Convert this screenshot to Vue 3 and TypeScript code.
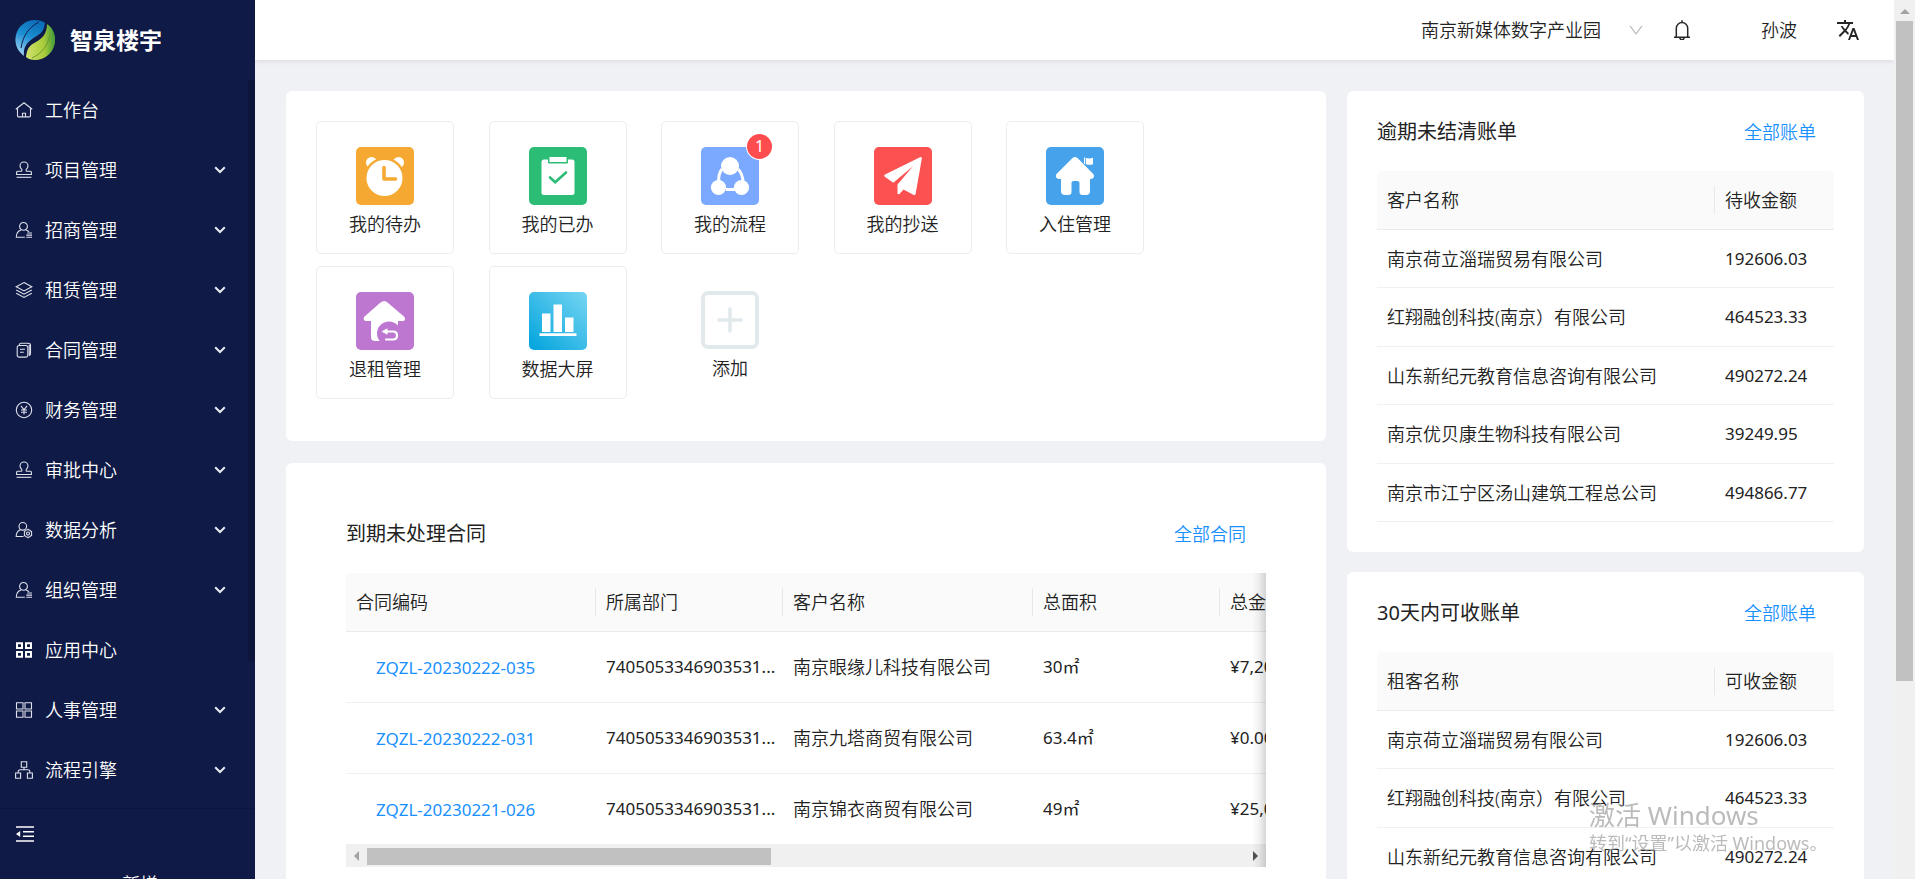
<script setup lang="ts">
import { ref } from 'vue'

interface MenuItem {
  label: string
  paths: string[]
  expandable: boolean
  bold?: boolean
}

const STAMP = [
  'M6.8 10.2V8.4C5.6 7.4 5 6.3 5 5a4 4 0 0 1 8 0c0 1.300-.6 2.400-1.800 3.400v1.800',
  'M6.800 10.200H2.600a1 1 0 0 0-1 1v2.300h14.800v-2.300a1 1 0 0 0-1-1h-4.200',
  'M1.600 16.300h14.800',
]
const PERSON_LIST = [
  'M8.500 1.500a3.900 3.900 0 1 0 0 7.800a3.900 3.900 0 1 0 0-7.800z',
  'M6 9c-3 1-4.700 3.400-4.700 7.200h8.600M11 9c1.200.4 2.200 1 3 1.900',
  'M12.300 12h4.700M11.300 14.100h5.700M11.300 16.200h5.700',
]

const menu: MenuItem[] = [
  {
    label: '工作台',
    expandable: false,
    paths: ['M.8 8.200L9 1.700l8.200 6.500', 'M2.500 7v7.700a1.200 1.200 0 0 0 1.200 1.200h10.600a1.200 1.200 0 0 0 1.200-1.200V7', 'M7.500 15.800v-3.600h3v3.600'],
  },
  { label: '项目管理', expandable: true, paths: STAMP },
  { label: '招商管理', expandable: true, paths: PERSON_LIST },
  {
    label: '租赁管理',
    expandable: true,
    paths: ['M9 1.600l7.800 4.100L9 9.900L1.200 5.700z', 'M1.200 9L9 13.200L16.800 9', 'M1.200 12.200L9 16.400l7.800-4.200'],
  },
  {
    label: '合同管理',
    expandable: true,
    paths: ['M4 4.500h7a1.800 1.800 0 0 1 1.800 1.800v8a1.800 1.800 0 0 1-1.800 1.800H4a1.800 1.800 0 0 1-1.800-1.800v-8A1.800 1.800 0 0 1 4 4.500z', 'M4.200 4c.2-1 .8-1.700 1.800-1.700h7.200c1.400 0 2.300.9 2.300 2.300v8c0 1.200-.6 1.900-1.600 2.100M14.200 4v10', 'M5 8.300h5M5 11.300h3.800'],
  },
  {
    label: '财务管理',
    expandable: true,
    paths: ['M9 1.300a7.700 7.700 0 1 0 0 15.400a7.700 7.700 0 1 0 0-15.400z', 'M6 4.800l3 4l3-4M9 8.800v4.800M6 9h6M6 11.300h6'],
  },
  { label: '审批中心', expandable: true, paths: STAMP },
  {
    label: '数据分析',
    expandable: true,
    paths: ['M7.800 1.500a3.800 3.800 0 1 0 0 7.600a3.800 3.800 0 1 0 0-7.600z', 'M5.400 8.800c-2.700 1-4.200 3.200-4.200 6.700h7.300', 'M13 8.800a3.700 3.700 0 1 0 0 7.400a3.700 3.700 0 1 0 0-7.400z', 'M13 11a1.500 1.500 0 1 0 0 3a1.500 1.500 0 1 0 0-3zM13 7.800v1M13 16.200v1M8.900 10.200l.9.500M16.200 14.300l.9.500M8.900 14.800l.9-.5M16.200 10.700l.9-.5'],
  },
  { label: '组织管理', expandable: true, paths: PERSON_LIST },
  {
    label: '应用中心',
    expandable: false,
    bold: true,
    paths: ['M2 2.300h5v4.700H2zM11 2.300h5v4.700h-5zM2 11h5v4.700H2zM11 11h5v4.700h-5z'],
  },
  {
    label: '人事管理',
    expandable: true,
    paths: ['M1.500 1.700h6.500v6.300H1.500zM10 1.700h6.500v6.300H10zM1.500 10h6.500v6.300H1.500zM10 10h6.500v6.300H10z'],
  },
  {
    label: '流程引擎',
    expandable: true,
    paths: ['M6.300.8h5.400v5.400H6.300zM.6 12h5v5.200h-5zM12.400 12h5v5.200h-5z', 'M9 6.200v2.600M3.100 12v-1.200a2 2 0 0 1 2-2h7.800a2 2 0 0 1 2 2V12'],
  },
]

interface Shortcut {
  label: string
  icon: string
  badge?: number
}

const shortcuts: Shortcut[] = [
  { label: '我的待办', icon: 'clock' },
  { label: '我的已办', icon: 'done' },
  { label: '我的流程', icon: 'flow', badge: 1 },
  { label: '我的抄送', icon: 'send' },
  { label: '入住管理', icon: 'checkin' },
  { label: '退租管理', icon: 'checkout' },
  { label: '数据大屏', icon: 'chart' },
]

const contracts = [
  { code: 'ZQZL-20230222-035', dept: '7405053346903531...', customer: '南京眼缘儿科技有限公司', area: '30㎡', amount: '¥7,200.00' },
  { code: 'ZQZL-20230222-031', dept: '7405053346903531...', customer: '南京九塔商贸有限公司', area: '63.4㎡', amount: '¥0.00' },
  { code: 'ZQZL-20230221-026', dept: '7405053346903531...', customer: '南京锦衣商贸有限公司', area: '49㎡', amount: '¥25,000.00' },
]

const bills = [
  { name: '南京荷立淄瑞贸易有限公司', amount: '192606.03' },
  { name: '红翔融创科技(南京）有限公司', amount: '464523.33' },
  { name: '山东新纪元教育信息咨询有限公司', amount: '490272.24' },
  { name: '南京优贝康生物科技有限公司', amount: '39249.95' },
  { name: '南京市江宁区汤山建筑工程总公司', amount: '494866.77' },
]

const panels = [
  { title: '逾期未结清账单', nameHead: '客户名称', amountHead: '待收金额' },
  { title: '30天内可收账单', nameHead: '租客名称', amountHead: '可收金额' },
]

const park = ref('南京新媒体数字产业园')
</script>

<template>
  <div class="layout">
    <aside class="sidebar">
      <div class="brand">
        <svg class="logo" viewBox="0 0 40 40" aria-hidden="true">
          <defs>
            <linearGradient id="leafBlue" x1="0.600" y1="0" x2="0.200" y2="1">
              <stop offset="0" stop-color="#0c6db8" />
              <stop offset="0.450" stop-color="#1c8fd2" />
              <stop offset="1" stop-color="#a4d4f2" />
            </linearGradient>
            <linearGradient id="leafGreen" x1="0" y1="0.500" x2="1" y2="0.400">
              <stop offset="0" stop-color="#cfe06a" />
              <stop offset="0.600" stop-color="#a9cc3a" />
              <stop offset="1" stop-color="#3f9a3a" />
            </linearGradient>
          </defs>
          <path d="M9 36C2 31-1 23 1 15C3 6 11 0 20 0c4 0 8 1 10 3c-1 9-5 11-10 14c-8 5-12 10-11 19z" fill="url(#leafBlue)" />
          <path d="M32 4c6 4 9 11 8 19c-2 10-10 17-20 17c-4 0-7-1-9-3c1-9 4-12 10-15c7-4 11-9 11-18z" fill="url(#leafGreen)" />
          <path d="M6 28C8 16 13 8 24 2" fill="none" stroke="#101c4a" stroke-width="1" />
          <path d="M17 38C27 33 33 26 35 14" fill="none" stroke="#6f9a2c" stroke-width="1" />
        </svg>
        <h1 class="brand-name">智泉楼宇</h1>
      </div>
      <div class="menu-area">
        <nav class="menu">
          <button v-for="item in menu" :key="item.label" type="button" class="menu-item">
            <svg class="menu-icon" :class="{ bold: item.bold }" viewBox="0 0 18 18" aria-hidden="true">
              <path v-for="d in item.paths" :key="d" :d="d" />
            </svg>
            <span class="menu-label">{{ item.label }}</span>
            <svg v-if="item.expandable" class="chevron" viewBox="0 0 12 8" aria-hidden="true">
              <path d="M1.200 1.200L6 6l4.800-4.800" />
            </svg>
          </button>
        </nav>
        <div class="menu-track"><div class="menu-thumb"></div></div>
      </div>
      <button type="button" class="collapse" aria-label="收起菜单">
        <svg viewBox="0 0 18 16" aria-hidden="true">
          <path d="M0 1h18M7 5.700h11M7 10.300h11M0 15h18" stroke="#fff" stroke-width="1.500" />
          <path d="M0 8l4.200-3v6z" fill="#fff" />
        </svg>
      </button>
      <button type="button" class="create"><span>+</span><span>新增</span></button>
    </aside>

    <div class="page">
      <header class="topbar">
        <label class="park">
          <select v-model="park" aria-label="园区">
            <option>南京新媒体数字产业园</option>
          </select>
          <svg class="park-arrow" viewBox="0 0 14 10" aria-hidden="true">
            <path d="M1 .8l6 8l6-8" />
          </svg>
        </label>
        <button type="button" class="icon-button bell" aria-label="消息">
          <svg viewBox="0 0 18 20" aria-hidden="true">
            <path d="M9 .3v2M3.300 16.600V8.200a5.700 5.700 0 0 1 11.400 0v8.400M1 17.200h16M6.900 17.600a2.100 2.100 0 0 0 4.200 0" />
          </svg>
        </button>
        <a href="#" class="user">孙波</a>
        <button type="button" class="icon-button translate" aria-label="语言">
          <svg viewBox="1 2 22 20" aria-hidden="true">
            <path d="M12.870 15.070l-2.540-2.510.03-.03A17.520 17.520 0 0 0 14.070 6H17V4h-7V2H8v2H1v2h11.170C11.500 7.920 10.440 9.750 9 11.350 8.070 10.320 7.300 9.190 6.690 8h-2c.73 1.630 1.730 3.170 2.980 4.560l-5.090 5.020L4 19l5-5 3.110 3.110.76-2.040zM18.500 10h-2L12 22h2l1.120-3h4.750L21 22h2l-4.500-12zm-2.620 7l1.620-4.330L19.120 17h-3.240z" />
          </svg>
        </button>
      </header>

      <main class="content">
        <div class="column">
          <section class="card shortcuts">
            <a v-for="s in shortcuts" :key="s.label" href="#" class="tile">
              <span class="tile-icon">
                <svg v-if="s.icon === 'clock'" viewBox="0 0 58 58" aria-hidden="true">
                  <rect width="58" height="58" rx="5" fill="#f5a932" />
                  <circle cx="15.500" cy="15.500" r="5.500" fill="#fff" /><circle cx="42.500" cy="15.500" r="5.500" fill="#fff" />
                  <circle cx="28.500" cy="31" r="20.500" fill="#f5a932" /><circle cx="28.500" cy="31" r="18" fill="#fff" />
                  <path d="M28 20.500v11.500h11.500" fill="none" stroke="#f5a932" stroke-width="3.600" stroke-linecap="round" stroke-linejoin="round" />
                </svg>
                <svg v-else-if="s.icon === 'done'" viewBox="0 0 58 58" aria-hidden="true">
                  <rect width="58" height="58" rx="5" fill="#2bbd76" />
                  <rect x="12.500" y="12.500" width="33" height="35.500" rx="2.500" fill="#fff" />
                  <rect x="19" y="8.500" width="20" height="8" rx="1" fill="#2bbd76" />
                  <rect x="20.500" y="10" width="17" height="5" fill="#fff" />
                  <path d="M21 30.500l5.200 4.800L37 25.500" fill="none" stroke="#2bbd76" stroke-width="2.600" stroke-linecap="round" />
                </svg>
                <svg v-else-if="s.icon === 'flow'" viewBox="0 0 58 58" aria-hidden="true">
                  <rect width="58" height="58" rx="5" fill="#7ba9ff" />
                  <path d="M21 22c-3 4-4 8-3 14M37 22c4 4 5 8 5 14M25 42.500h9" fill="none" stroke="#fff" stroke-width="3" />
                  <circle cx="29" cy="19" r="9" fill="#fff" /><circle cx="17.500" cy="40.500" r="7.600" fill="#fff" /><circle cx="40.500" cy="40.500" r="7.600" fill="#fff" />
                </svg>
                <svg v-else-if="s.icon === 'send'" viewBox="0 0 58 58" aria-hidden="true">
                  <rect width="58" height="58" rx="5" fill="#fb5150" />
                  <path d="M46.500 10L11 27.500c-1 .6-1 1.600-.2 2.200l8.500 6.100L39 19.300L23.500 37.500V47l1.700.3l4.300-4.800l10.300 5.600c1 .3 1.600-.2 1.800-1l6.200-35.400c.1-1.300-.4-1.900-1.300-1.700z" fill="#fff" />
                </svg>
                <svg v-else-if="s.icon === 'checkin'" viewBox="0 0 58 58" aria-hidden="true">
                  <rect width="58" height="58" rx="5" fill="#46a2ea" />
                  <path d="M26.500 11q2.500-2 5 0l15.800 16c1.500 2.500.5 4.500-2 5h-1.300v12q0 4-4 4h-3.500q-3 0-3-3v-9q0-2-2-2h-4q-2 0-2 2v9q0 3-3 3H19q-4 0-4-4V32h-2c-3-.5-4-2.500-2.500-5z" fill="#fff" />
                  <path d="M38 10.500h1.200V17H38zM40 11q3.500 1 7-.3v6.600q-3.500 1-7 0z" fill="#fff" />
                </svg>
                <svg v-else-if="s.icon === 'checkout'" viewBox="0 0 58 58" aria-hidden="true">
                  <rect width="58" height="58" rx="5" fill="#bd77d0" />
                  <path d="M24.500 10.500q4-3 7 0L48.500 25c1 2 .5 4-1.500 4h-5v15q0 5-4 5H19q-4 0-4-4V29h-5c-2 0-3-2-2-4z" fill="#fff" />
                  <circle cx="33" cy="41.500" r="12" fill="#bd77d0" />
                  <path d="M28 39.500h9q4 0 4 4t-4 4h-7" fill="none" stroke="#fff" stroke-width="2.200" stroke-linecap="round" />
                  <path d="M25.500 39.500l6-3.300v6.600z" fill="#fff" />
                </svg>
                <svg v-else viewBox="0 0 58 58" aria-hidden="true">
                  <defs>
                    <linearGradient id="chartBg" x1="0" y1="1" x2="1" y2="0">
                      <stop offset="0" stop-color="#00a3dd" /><stop offset="1" stop-color="#76d5f2" />
                    </linearGradient>
                  </defs>
                  <rect width="58" height="58" rx="5" fill="url(#chartBg)" />
                  <path d="M13 21.500h8.500V40H13zM24.500 12.500H33V40h-8.500zM36 25.500h8.500V40H36zM10.500 41.200h37V44h-37z" fill="#fff" />
                </svg>
                <span v-if="s.badge" class="badge">{{ s.badge }}</span>
              </span>
              <span>{{ s.label }}</span>
            </a>
            <button type="button" class="tile add">
              <span class="tile-icon">
                <svg viewBox="0 0 58 58" aria-hidden="true">
                  <rect x="2" y="2" width="54" height="54" rx="5" fill="none" stroke="#e2e9ec" stroke-width="4" />
                  <path d="M29 18v22M18 29h22" stroke="#e2e9ec" stroke-width="3.600" stroke-linecap="round" />
                </svg>
              </span>
              <span>添加</span>
            </button>
          </section>

          <section class="card contracts">
            <div class="card-head">
              <h2>到期未处理合同</h2>
              <a href="#" class="link">全部合同</a>
            </div>
            <div class="table-view">
              <table class="wide">
                <colgroup>
                  <col class="w-code" /><col class="w-dept" /><col class="w-customer" /><col class="w-area" /><col class="w-amount" />
                </colgroup>
                <thead>
                  <tr><th>合同编码</th><th>所属部门</th><th>客户名称</th><th>总面积</th><th>总金额</th></tr>
                </thead>
                <tbody>
                  <tr v-for="c in contracts" :key="c.code">
                    <td class="code"><a href="#" class="link num">{{ c.code }}</a></td>
                    <td class="num">{{ c.dept }}</td>
                    <td>{{ c.customer }}</td>
                    <td class="num">{{ c.area }}</td>
                    <td class="num">{{ c.amount }}</td>
                  </tr>
                </tbody>
              </table>
              <div class="hbar">
                <svg viewBox="0 0 5 10" aria-hidden="true"><path d="M5 0v10L0 5z" fill="#a3a3a3" /></svg>
                <div class="hbar-track"><div class="hbar-thumb"></div></div>
                <svg viewBox="0 0 5 10" aria-hidden="true"><path d="M0 0v10l5-5z" fill="#505050" /></svg>
              </div>
              <div class="edge-shadow"></div>
            </div>
          </section>
        </div>

        <div class="column">
          <section v-for="p in panels" :key="p.title" class="card bills">
            <div class="card-head">
              <h2>{{ p.title }}</h2>
              <a href="#" class="link">全部账单</a>
            </div>
            <table class="narrow">
              <colgroup><col /><col class="w-bill" /></colgroup>
              <thead>
                <tr><th>{{ p.nameHead }}</th><th>{{ p.amountHead }}</th></tr>
              </thead>
              <tbody>
                <tr v-for="b in bills" :key="b.name">
                  <td>{{ b.name }}</td>
                  <td class="num">{{ b.amount }}</td>
                </tr>
              </tbody>
            </table>
          </section>
        </div>
      </main>
    </div>

    <div class="vbar">
      <svg viewBox="0 0 10 5" aria-hidden="true"><path d="M0 5h10L5 0z" fill="#a3a3a3" /></svg>
      <div class="vbar-thumb"></div>
    </div>

    <div class="watermark">
      <p class="watermark-title">激活 Windows</p>
      <p>转到“设置”以激活 Windows。</p>
    </div>
  </div>
</template>

<style>
body {
  margin: 0;
  overflow: hidden;
}
</style>

<style scoped>
.layout {
  display: grid;
  grid-template-columns: 255px minmax(0, 1fr) 21px;
  height: 100vh;
  overflow: hidden;
  background: #f0f1f5;
  color: #222;
  font-family: 'Noto Sans', 'Noto Sans CJK SC', sans-serif;
  font-size: 18px;
  font-weight: 350;
  line-height: 28px;
}
* {
  box-sizing: border-box;
}
svg {
  display: block;
}
button,
select {
  padding: 0;
  border: 0;
  background: none;
  color: inherit;
  font: inherit;
}
a {
  color: inherit;
  text-decoration: none;
}
.link {
  color: #1890ff;
}

.sidebar {
  display: flex;
  flex-direction: column;
  height: 100vh;
  overflow: hidden;
  background: #0f1a47;
  color: #fff;
}
.brand {
  display: flex;
  align-items: center;
  flex: none;
  gap: 15px;
  height: 80px;
  padding-left: 15px;
}
.logo {
  width: 40px;
  height: 40px;
}
.brand-name {
  margin: 0;
  font-size: 23px;
  font-weight: 700;
}
.menu-area {
  display: flex;
  flex: none;
  border-bottom: 1px solid #0c153d;
}
.menu {
  flex: 1;
  padding-bottom: 8px;
}
.menu-item {
  display: flex;
  align-items: center;
  width: 100%;
  height: 60px;
  padding: 0 22px 0 15px;
}
.menu-icon {
  width: 18px;
  height: 18px;
  margin-right: 12px;
  fill: none;
  stroke: #dfe1ea;
  stroke-width: 1.1;
}
.menu-icon.bold {
  stroke: #fff;
  stroke-width: 2;
}
.menu-label {
  flex: 1;
  text-align: left;
}
.chevron {
  width: 12px;
  height: 8px;
  fill: none;
  stroke: #e8e9f0;
  stroke-width: 2;
}
.menu-track {
  width: 7px;
}
.menu-thumb {
  height: 80%;
  border-radius: 4px;
  background: #0d153a;
}
.collapse {
  flex: none;
  width: 18px;
  height: 16px;
  margin: 17px 0 0 16px;
}
.create {
  display: flex;
  flex: none;
  gap: 14px;
  margin: 28px 0 0 98px;
}

.page {
  min-width: 0;
}
.topbar {
  display: flex;
  align-items: center;
  justify-content: flex-end;
  height: 60px;
  padding-right: 35px;
  background: #fff;
  box-shadow: 0 1px 5px rgba(0, 21, 41, 0.1);
}
.park {
  display: flex;
  align-items: center;
  gap: 28px;
}
.park select {
  appearance: none;
  width: 180px;
}
.park-arrow {
  width: 14px;
  height: 10px;
  fill: none;
  stroke: #bfbfbf;
  stroke-width: 1.3;
}
.icon-button {
  display: block;
}
.bell {
  width: 18px;
  height: 20px;
  margin-left: 30px;
  fill: none;
  stroke: #262626;
  stroke-width: 1.5;
}
.user {
  margin-left: 70px;
}
.translate {
  width: 22px;
  height: 20px;
  margin-left: 40px;
  fill: #262626;
}

.content {
  display: grid;
  grid-template-columns: 1040fr 517fr;
  gap: 21px;
  padding: 31px 30px 0 31px;
}
.column {
  min-width: 0;
}
.card {
  border-radius: 6px;
  background: #fff;
}
.shortcuts {
  display: grid;
  grid-template-columns: repeat(5, 138px);
  justify-content: space-between;
  row-gap: 12px;
  margin-bottom: 22px;
  padding: 30px 182px 42px 30px;
}
.tile {
  display: flex;
  flex-direction: column;
  align-items: center;
  gap: 5px;
  height: 133px;
  padding-top: 25px;
  border: 1px solid #ededed;
  border-radius: 5px;
}
.tile.add {
  border: 0;
}
.tile-icon {
  position: relative;
  width: 58px;
  height: 58px;
}
.badge {
  position: absolute;
  top: -13px;
  right: -13px;
  width: 25px;
  height: 25px;
  border-radius: 50%;
  background: #ff4d4f;
  box-shadow: 0 0 0 1px #fff;
  color: #fff;
  font-size: 16px;
  font-weight: 400;
  line-height: 25px;
  text-align: center;
}

.card-head {
  display: flex;
  align-items: center;
  justify-content: space-between;
  height: 28px;
}
h2 {
  margin: 0;
  font-size: 20px;
  font-weight: 400;
}
table {
  width: 100%;
  border-collapse: separate;
  border-spacing: 0;
  table-layout: fixed;
}
th {
  height: 59px;
  padding: 0 10px;
  border-bottom: 1px solid #ebebeb;
  background: #fafafa linear-gradient(#e8e8e8, #e8e8e8) right center / 1px 28px no-repeat;
  font-weight: 350;
  text-align: left;
}
th:first-child {
  border-top-left-radius: 5px;
}
th:last-child {
  background-image: none;
}
td {
  padding: 0 10px;
  border-bottom: 1px solid #f0f0f0;
  white-space: nowrap;
}
.num {
  font-size: 17px;
  font-weight: 400;
}

.contracts {
  padding: 57px 60px 60px;
}
.contracts .card-head {
  padding-right: 20px;
}
.table-view {
  position: relative;
  margin-top: 25px;
  overflow: hidden;
}
.wide {
  width: 1374px;
}
.wide td {
  height: 71px;
}
.wide .code {
  padding-left: 30px;
}
.w-code,
.w-customer {
  width: 250px;
}
.w-dept,
.w-area {
  width: 187px;
}
.w-amount {
  width: 500px;
}
.hbar {
  display: flex;
  align-items: center;
  gap: 8px;
  height: 22px;
  padding: 0 8px;
  background: #f0f0f0;
}
.hbar svg {
  width: 5px;
  height: 10px;
}
.hbar-track {
  flex: 1;
}
.hbar-thumb {
  width: 46%;
  height: 17px;
  background: #c1c1c1;
}
.edge-shadow {
  position: absolute;
  top: 0;
  right: 0;
  bottom: 0;
  width: 14px;
  background: linear-gradient(to right, rgba(0, 0, 0, 0), rgba(0, 0, 0, 0.05) 50%, rgba(0, 0, 0, 0.16));
}

.bills {
  margin-bottom: 20px;
  padding: 27px 30px 30px;
}
.bills .card-head {
  padding-right: 18px;
}
.narrow {
  margin-top: 25px;
}
.narrow th:last-child {
  border-top-right-radius: 5px;
}
.narrow td {
  height: 58px;
}
.narrow tr:nth-child(even) td {
  height: 59px;
}
.w-bill {
  width: 119px;
}

.vbar {
  display: flex;
  flex-direction: column;
  align-items: center;
  gap: 7px;
  padding-top: 9px;
  background: #f0f0f0;
}
.vbar svg {
  width: 10px;
  height: 5px;
}
.vbar-thumb {
  width: 17px;
  height: 660px;
  background: #c1c1c1;
}

.watermark {
  position: fixed;
  right: 88px;
  bottom: 22px;
  width: 238px;
  color: rgba(150, 150, 150, 0.65);
  font-weight: 400;
  white-space: nowrap;
  pointer-events: none;
}
.watermark p {
  margin: 0;
}
.watermark .watermark-title {
  font-size: 26px;
}
</style>
